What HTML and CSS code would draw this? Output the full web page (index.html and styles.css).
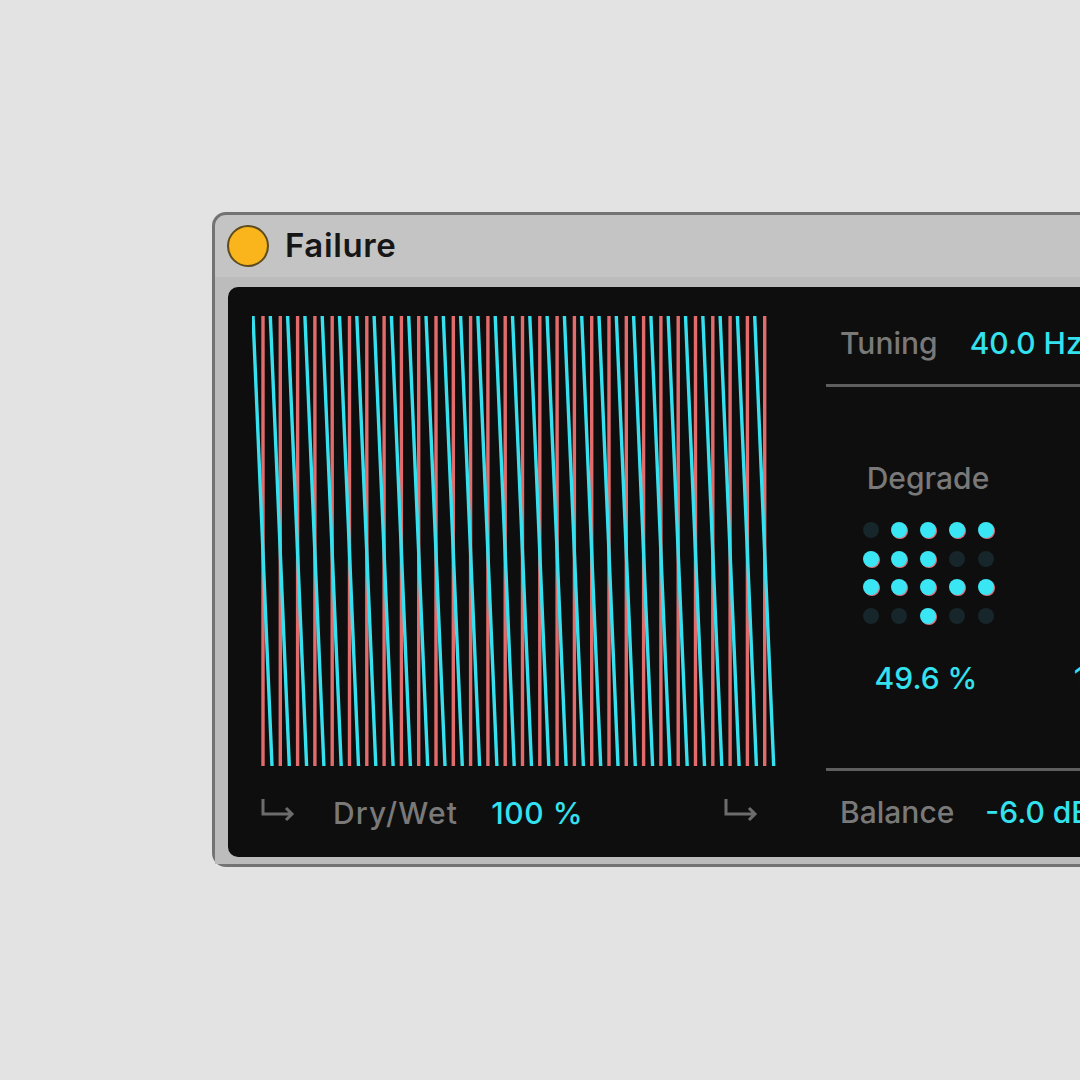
FILE: index.html
```html
<!DOCTYPE html>
<html>
<head>
<meta charset="utf-8">
<link rel="stylesheet" href="styles.css">
</head>
<body>
<div class="stage">
  <div class="window">
    <div class="titlebar">
      <span class="power"></span>
      <span class="title">Failure</span>
    </div>
    <div class="content">
      <div class="panel">
        <div class="left">
          <svg class="scope" width="524" height="450" viewBox="0 0 524 450">
            <path class="red" d="M11 0V450M28.3 0V450M45.6 0V450M62.9 0V450M80.2 0V450M97.5 0V450M114.8 0V450M132.1 0V450M149.4 0V450M166.7 0V450M184 0V450M201.3 0V450M218.6 0V450M235.9 0V450M253.2 0V450M270.5 0V450M287.8 0V450M305.1 0V450M322.4 0V450M339.7 0V450M357 0V450M374.3 0V450M391.6 0V450M408.9 0V450M426.2 0V450M443.5 0V450M460.8 0V450M478.1 0V450M495.4 0V450M512.7 0V450"/>
            <path class="cyan" d="M1 0L20 450M18.3 0L37.3 450M35.6 0L54.6 450M52.9 0L71.9 450M70.2 0L89.2 450M87.5 0L106.5 450M104.8 0L123.8 450M122.1 0L141.1 450M139.4 0L158.4 450M156.7 0L175.7 450M174 0L193 450M191.3 0L210.3 450M208.6 0L227.6 450M225.9 0L244.9 450M243.2 0L262.2 450M260.5 0L279.5 450M277.8 0L296.8 450M295.1 0L314.1 450M312.4 0L331.4 450M329.7 0L348.7 450M347 0L366 450M364.3 0L383.3 450M381.6 0L400.6 450M398.9 0L417.9 450M416.2 0L435.2 450M433.5 0L452.5 450M450.8 0L469.8 450M468.1 0L487.1 450M485.4 0L504.4 450M502.7 0L521.7 450"/>
          </svg>
          <div class="bottomrow">
            <svg class="arrow first" width="36" height="30" viewBox="0 0 36 30"><path d="M3 1V16H32M26 10L32 16L26 22"/></svg>
            <span class="label drylabel">Dry/Wet</span>
            <span class="value dryvalue">100 %</span>
            <svg class="arrow second" width="36" height="30" viewBox="0 0 36 30"><path d="M3 1V16H32M26 10L32 16L26 22"/></svg>
          </div>
        </div>
        <div class="right">
          <div class="row tuning">
            <span class="label">Tuning</span>
            <span class="value">40.0 Hz</span>
          </div>
          <div class="divider"></div>
          <div class="params">
            <div class="param">
              <div class="label plabel">Degrade</div>
              <div class="dots">
                <i class="off"></i><i></i><i></i><i></i><i></i>
                <i></i><i></i><i></i><i class="off"></i><i class="off"></i>
                <i></i><i></i><i></i><i></i><i></i>
                <i class="off"></i><i class="off"></i><i></i><i class="off"></i><i class="off"></i>
              </div>
              <div class="value pvalue">49.6 %</div>
            </div>
            <div class="param">
              <div class="plabel"></div>
              <div class="dots blank"></div>
              <div class="value pvalue">12.0 %</div>
            </div>
          </div>
          <div class="divider"></div>
          <div class="row balance">
            <span class="label">Balance</span>
            <span class="value">-6.0 dB</span>
          </div>
        </div>
      </div>
    </div>
  </div>
</div>
</body>
</html>
```
FILE: styles.css
```css
html, body {
  margin: 0;
  padding: 0;
}
body {
  width: 1080px;
  height: 1080px;
  overflow: hidden;
  background: #e3e3e3;
  font-family: "Inter", "Noto Sans", sans-serif;
}
.stage {
  padding: 212px 0 0 212px;
}
.window {
  width: 1000px;
  border: 3px solid #737373;
  border-radius: 14px;
  background: #c4c4c4;
}
.titlebar {
  height: 62px;
  display: flex;
  align-items: center;
  padding-left: 12px;
  gap: 16px;
}
.power {
  width: 38px;
  height: 38px;
  border-radius: 50%;
  background: #f9b51b;
  border: 2px solid #5e4c1f;
}
.title {
  font-size: 33px;
  font-weight: 600;
  color: #161616;
  letter-spacing: 0.6px;
  margin-top: -2px;
}
.content {
  padding: 10px 0 7px 13px;
  background: #bcbcbc;
}
.panel {
  height: 570px;
  background: #0e0e0e;
  border-radius: 10px 0 0 10px;
  display: flex;
}
.left {
  width: 574px;
  padding: 29px 0 0 24px;
  margin-right: 50px;
  display: flex;
  flex-direction: column;
}
.scope {
  display: block;
}
.scope path {
  fill: none;
  stroke-width: 3.4;
}
.scope .red {
  stroke: #e26c6c;
}
.scope .cyan {
  stroke: #36e0ee;
}
.bottomrow {
  flex: 1;
  display: flex;
  align-items: center;
  padding-top: 2px;
}
.arrow {
  display: block;
  flex: none;
}
.arrow path {
  fill: none;
  stroke: #6c6c6c;
  stroke-width: 3;
}
.arrow.first {
  margin-left: 8px;
}
.arrow.second {
  margin-left: auto;
  margin-right: 17px;
}
.label {
  color: #797979;
  font-size: 30px;
  font-weight: 500;
  line-height: 36px;
}
.value {
  color: #33e1ef;
  font-size: 30px;
  font-weight: 500;
  line-height: 36px;
}
.drylabel {
  margin-left: 37px;
  letter-spacing: 1.2px;
}
.dryvalue {
  margin-left: 33px;
  letter-spacing: 0.6px;
}
.right {
  flex: 1;
  display: flex;
  flex-direction: column;
}
.row {
  display: flex;
  align-items: center;
  gap: 32px;
  padding-left: 14px;
  box-sizing: border-box;
  white-space: nowrap;
}
.tuning {
  height: 97px;
  padding-top: 15px;
}
.balance {
  height: 86px;
  padding-bottom: 4px;
  gap: 31px;
}
.divider {
  height: 3px;
  background: #5e5e5e;
}
.params {
  height: 381px;
  display: flex;
  padding-left: 4px;
}
.param {
  width: 196px;
  flex: none;
  display: flex;
  flex-direction: column;
  align-items: center;
  padding-top: 73px;
  white-space: nowrap;
}
.plabel {
  height: 36px;
}
.dots {
  margin-top: 26px;
  display: grid;
  grid-template-columns: repeat(5, 16px);
  grid-auto-rows: 16px;
  column-gap: 12.8px;
  row-gap: 12.7px;
  width: 131px;
  height: 102px;
}
.dots i {
  display: block;
  width: 16px;
  height: 16px;
  border-radius: 50%;
  background: #3ae6f4;
  box-shadow: 1px 1px 0 #d7727c;
}
.dots i.off {
  background: #17262a;
  box-shadow: none;
}
.pvalue {
  margin-top: 36px;
  margin-left: -4px;
}
```
